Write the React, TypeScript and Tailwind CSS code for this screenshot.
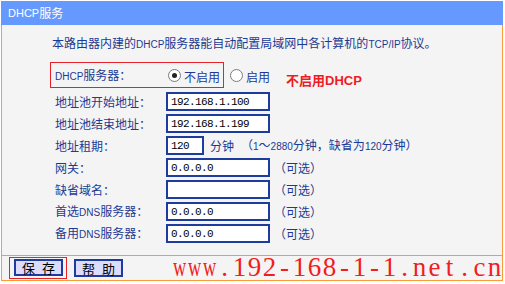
import React from "react";

const CJK = { fontFamily: '"Noto Sans CJK SC", "Liberation Sans", sans-serif' };
const LAT = "text-[10px] [font-family:'Liberation_Sans',sans-serif]";

function Radio({ checked }: { checked?: boolean }) {
  return (
    <span className="w-[13px] h-[13px] rounded-full border border-[#7a7a7a] bg-white flex items-center justify-center shrink-0">
      {checked && <span className="w-[5px] h-[5px] rounded-full bg-[#222]" />}
    </span>
  );
}

function Box({ value, w = "w-[104px]" }: { value: string; w?: string }) {
  return (
    <div
      className={`${w} h-[19px] border-2 border-[#1e3c9e] bg-white pl-[3px] flex items-center text-[11px] tracking-[-0.6px] text-black shrink-0`}
      style={{ fontFamily: '"Liberation Mono", monospace' }}
    >
      {value}
    </div>
  );
}

function Opt() {
  return <span className="ml-[4px]">（可选）</span>;
}

function Btn({ a, b, extra }: { a: string; b: string; extra: string }) {
  return (
    <div
      className={`${extra} w-[49px] border-2 border-[#1e3ca0] bg-[#dcdcff] flex items-center justify-center gap-[7px] text-[13px] text-black leading-none`}
    >
      <span>{a}</span>
      <span>{b}</span>
    </div>
  );
}

export default function App() {
  const wm = "www.192-168-1-1.net.cn".split("");
  return (
    <div className="w-[505px] h-[284px] bg-white relative text-[12px] leading-[16px]" style={CJK}>
      <div className="ml-[1px] mt-[1px] w-[502px]">
        <div className="h-[24px] bg-[#6699ff] text-white pl-[7px] flex items-center">
          <span className={LAT + " text-[11px]"}>DHCP</span>服务
        </div>
        <div className="h-[231px] border-x border-b border-[#f99b3b] bg-[#f4f4f4] text-[#1b3a93] pt-[10px]">
          <div className="pl-[50px] h-[16px]">
            本路由器内建的<span className={LAT}>DHCP</span>服务器能自动配置局域网中各计算机的
            <span className={LAT}>TCP/IP</span>协议。
          </div>
          <div className="ml-[48px] mt-[11px] flex items-center">
            <div className="w-[174px] h-[26px] border border-[#e8202a] flex items-center pl-[4px]">
              <span className="w-[113px] shrink-0 translate-y-[1px]">
                <span className={LAT}>DHCP</span>服务器：
              </span>
              <Radio checked />
              <span className="ml-[3px] translate-y-[2px]">不启用</span>
            </div>
            <span className="ml-[6px]">
              <Radio />
            </span>
            <span className="ml-[3px] translate-y-[2px]">启用</span>
            <span
              className="ml-[16px] translate-y-[6px] text-[13px] font-bold text-[#ee1c25]"
              style={{ fontFamily: '"Liberation Sans", "Noto Sans CJK SC", sans-serif' }}
            >
              不启用DHCP
            </span>
          </div>
          <div className="ml-[53px] mt-[4px] flex flex-col gap-[3px]">
            <div className="flex items-center h-[19px]">
              <span className="w-[111px] shrink-0">地址池开始地址：</span>
              <Box value="192.168.1.100" />
            </div>
            <div className="flex items-center h-[19px]">
              <span className="w-[111px] shrink-0">地址池结束地址：</span>
              <Box value="192.168.1.199" />
            </div>
            <div className="flex items-center h-[19px]">
              <span className="w-[111px] shrink-0">地址租期：</span>
              <Box value="120" w="w-[38px]" />
              <span className="ml-[6px]">分钟</span>
              <span className="ml-[7px]">
                （<span className={LAT}>1</span>～<span className={LAT}>2880</span>分钟，缺省为
                <span className={LAT}>120</span>分钟）
              </span>
            </div>
            <div className="flex items-center h-[19px]">
              <span className="w-[111px] shrink-0">网关：</span>
              <Box value="0.0.0.0" />
              <Opt />
            </div>
            <div className="flex items-center h-[19px]">
              <span className="w-[111px] shrink-0">缺省域名：</span>
              <Box value="" />
              <Opt />
            </div>
            <div className="flex items-center h-[19px]">
              <span className="w-[111px] shrink-0">
                首选<span className={LAT}>DNS</span>服务器：
              </span>
              <Box value="0.0.0.0" />
              <Opt />
            </div>
            <div className="flex items-center h-[19px]">
              <span className="w-[111px] shrink-0">
                备用<span className={LAT}>DNS</span>服务器：
              </span>
              <Box value="0.0.0.0" />
              <Opt />
            </div>
          </div>
        </div>
        <div className="h-[25px] border-x border-b border-[#f99b3b] bg-[#f4f4f4] flex items-start pt-[1px] pl-[7px]">
          <div className="w-[58px] h-[22px] border border-[#e8202a] pl-[4px] pt-[1px]">
            <Btn a="保" b="存" extra="h-[17px]" />
          </div>
          <Btn a="帮" b="助" extra="ml-[7px] mt-[2px] h-[18px]" />
        </div>
      </div>
      <div
        className="absolute left-[172px] top-[253px] flex text-[27px] leading-[27px] text-[#f21d1d]"
        style={{ fontFamily: '"Liberation Serif", serif' }}
      >
        {wm.map((c, i) => (
          <span key={i} className="w-[15px] flex justify-center">
            {c === "w" ? <span className="inline-block scale-x-[0.68]">w</span> : c}
          </span>
        ))}
      </div>
    </div>
  );
}
